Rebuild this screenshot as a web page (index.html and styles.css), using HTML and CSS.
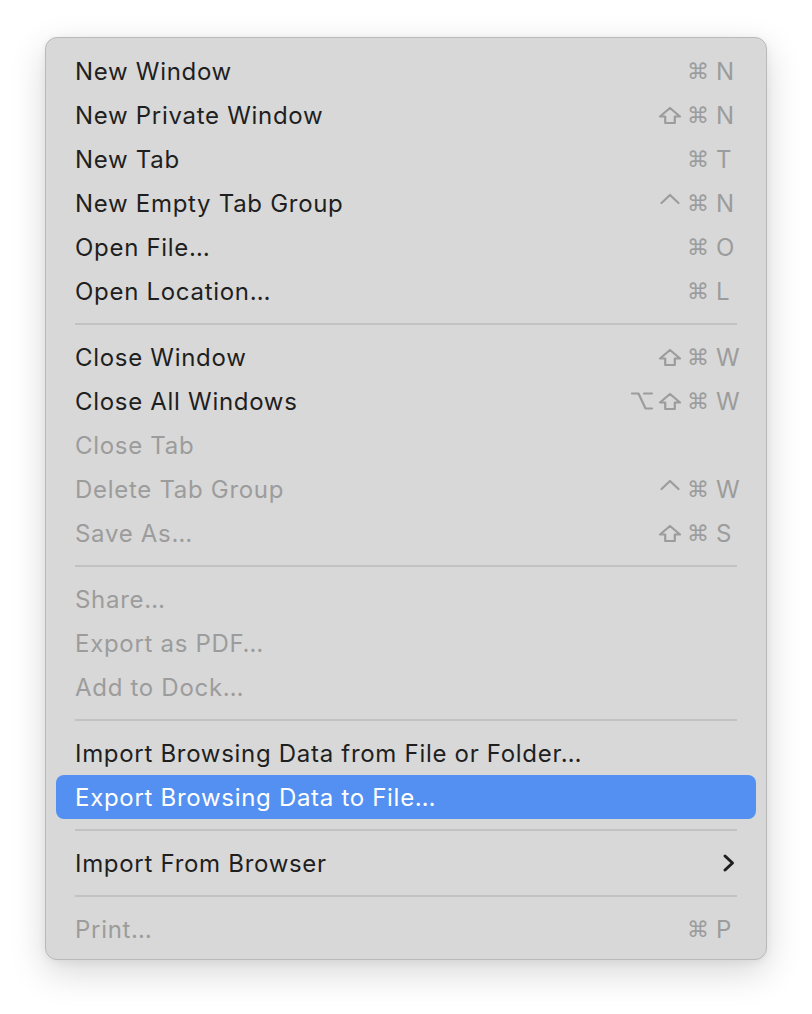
FILE: index.html
```html
<!DOCTYPE html>
<html>
<head>
<meta charset="utf-8">
<link rel="stylesheet" href="styles.css">
</head>
<body>
<div class="menu">
  <div class="item"><span class="label">New Window</span><span class="keys"><span class="mods"><span class="cmd">⌘</span></span><span class="key">N</span></span></div>
  <div class="item"><span class="label">New Private Window</span><span class="keys"><span class="mods"><svg class="mod" viewBox="0 0 28 24"><path d="M14 5 L24 13.5 L18.8 13.5 L18.8 20 L9.2 20 L9.2 13.5 L4 13.5 Z"/></svg><span class="cmd">⌘</span></span><span class="key">N</span></span></div>
  <div class="item"><span class="label">New Tab</span><span class="keys"><span class="mods"><span class="cmd">⌘</span></span><span class="key">T</span></span></div>
  <div class="item"><span class="label">New Empty Tab Group</span><span class="keys"><span class="mods"><svg class="mod" viewBox="0 0 28 24"><path d="M5.5 12 L14 4 L22.5 12"/></svg><span class="cmd">⌘</span></span><span class="key">N</span></span></div>
  <div class="item"><span class="label">Open File…</span><span class="keys"><span class="mods"><span class="cmd">⌘</span></span><span class="key">O</span></span></div>
  <div class="item"><span class="label">Open Location…</span><span class="keys"><span class="mods"><span class="cmd">⌘</span></span><span class="key">L</span></span></div>
  <div class="sep"></div>
  <div class="item"><span class="label">Close Window</span><span class="keys"><span class="mods"><svg class="mod" viewBox="0 0 28 24"><path d="M14 5 L24 13.5 L18.8 13.5 L18.8 20 L9.2 20 L9.2 13.5 L4 13.5 Z"/></svg><span class="cmd">⌘</span></span><span class="key">W</span></span></div>
  <div class="item"><span class="label">Close All Windows</span><span class="keys"><span class="mods"><svg class="mod" viewBox="0 0 28 24"><path d="M4 4.5 L10.5 4.5 L17.5 19.5 L24 19.5 M16 4.5 L24 4.5"/></svg><svg class="mod" viewBox="0 0 28 24"><path d="M14 5 L24 13.5 L18.8 13.5 L18.8 20 L9.2 20 L9.2 13.5 L4 13.5 Z"/></svg><span class="cmd">⌘</span></span><span class="key">W</span></span></div>
  <div class="item disabled"><span class="label">Close Tab</span></div>
  <div class="item disabled"><span class="label">Delete Tab Group</span><span class="keys"><span class="mods"><svg class="mod" viewBox="0 0 28 24"><path d="M5.5 12 L14 4 L22.5 12"/></svg><span class="cmd">⌘</span></span><span class="key">W</span></span></div>
  <div class="item disabled"><span class="label">Save As…</span><span class="keys"><span class="mods"><svg class="mod" viewBox="0 0 28 24"><path d="M14 5 L24 13.5 L18.8 13.5 L18.8 20 L9.2 20 L9.2 13.5 L4 13.5 Z"/></svg><span class="cmd">⌘</span></span><span class="key">S</span></span></div>
  <div class="sep"></div>
  <div class="item disabled"><span class="label">Share…</span></div>
  <div class="item disabled"><span class="label">Export as PDF…</span></div>
  <div class="item disabled"><span class="label">Add to Dock…</span></div>
  <div class="sep"></div>
  <div class="item"><span class="label">Import Browsing Data from File or Folder…</span></div>
  <div class="item selected"><span class="label">Export Browsing Data to File…</span></div>
  <div class="sep"></div>
  <div class="item"><span class="label">Import From Browser</span><span class="keys"><svg class="chev" width="14" height="20" viewBox="0 0 14 20"><path d="M3 3 L10.5 10 L3 17"/></svg></span></div>
  <div class="sep"></div>
  <div class="item disabled"><span class="label">Print…</span><span class="keys"><span class="mods"><span class="cmd">⌘</span></span><span class="key">P</span></span></div>
</div>
</body>
</html>
```
FILE: styles.css
```css
html, body {
  margin: 0;
  padding: 0;
  background: #ffffff;
}
body {
  box-sizing: border-box;
  min-height: 1014px;
  padding: 37px 0 0 45px;
  font-family: "Inter", "Liberation Sans", sans-serif;
}
.menu {
  box-sizing: border-box;
  width: 722px;
  height: 923px;
  background: #d8d8d8;
  border: 1px solid #b9b9b9;
  border-radius: 12px;
  padding: 11px 10px 8px 10px;
  box-shadow: 0 12px 36px rgba(0, 0, 0, 0.16), 0 2px 8px rgba(0, 0, 0, 0.06);
}
.item {
  height: 44px;
  display: flex;
  align-items: center;
  justify-content: space-between;
  padding: 0 16px 0 19px;
  border-radius: 8px;
  font-size: 24px;
  letter-spacing: 0.7px;
  color: #1f1f1f;
}
.item.disabled {
  color: #9c9c9c;
}
.item.selected {
  background: #5390f1;
  color: #ffffff;
}
.label {
  white-space: nowrap;
}
.keys {
  display: flex;
  align-items: center;
  color: #9c9c9c;
}
.mods {
  display: flex;
  align-items: center;
  font-family: "DejaVu Sans", sans-serif;
  font-size: 22px;
  letter-spacing: 0;
}
.cmd {
  width: 28px;
  text-align: center;
}
.mod {
  width: 28px;
  height: 24px;
  fill: none;
  stroke: #9c9c9c;
  stroke-width: 2.2;
  stroke-linejoin: round;
  stroke-linecap: round;
}
.key {
  width: 24px;
  margin-left: 4px;
  font-size: 24px;
  letter-spacing: 0;
}
.chev {
  margin-right: 4px;
  fill: none;
  stroke: #1f1f1f;
  stroke-width: 3;
  stroke-linecap: round;
  stroke-linejoin: round;
}
.sep {
  height: 22px;
  display: flex;
  align-items: center;
  padding: 0 19px;
}
.sep::before {
  content: "";
  flex: 1;
  height: 2px;
  background: #c2c2c2;
}
```
